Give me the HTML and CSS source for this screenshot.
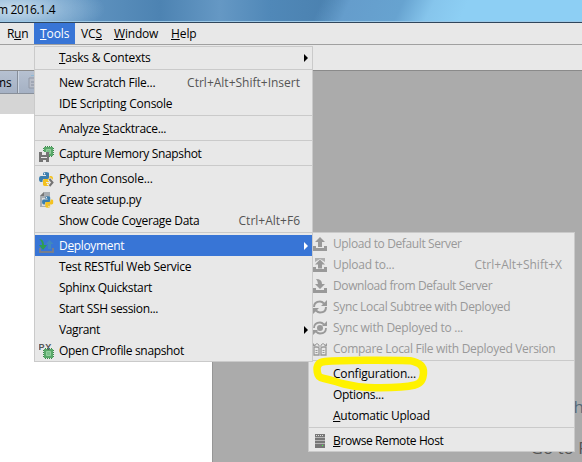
FILE: index.html
```html
<!DOCTYPE html>
<html lang="en">
<head>
<meta charset="utf-8">
<title>Tools menu</title>
<link rel="stylesheet" href="styles.css">
</head>
<body>
<svg class="defs" aria-hidden="true">
  <symbol id="chip" viewBox="0 0 11 11"><path d="M2 .5h8M2 10.500h8M.5 2v8M10.500 2v8" stroke="#3c8a4c" stroke-dasharray="1 1"/><path d="M1 1h9v9H1z" fill="#59a869"/><path d="M3.500 3.500h4v4h-4z" fill="#7cc08a" stroke="#92cf9c"/></symbol>
  <symbol id="python" viewBox="0 0 14 14"><path d="M4 3V1.5Q4 0 7 0t3 1.500V5.500Q10 7 8.500 7H5Q3.500 7 3.500 9v1H2Q0 10 0 7t2-3h5V3z" fill="#3c7eae"/><path d="M10 11v1.500Q10 14 7 14t-3-1.500V8.500Q4 7 5.500 7H9q1.500 0 1.500-2V4H12q2 0 2 3t-2 3H7v1z" fill="#f4c21f"/><circle cx="5.500" cy="1.700" r=".7" fill="#fff"/><circle cx="8.500" cy="12.300" r=".7" fill="#fff"/></symbol>
  <symbol id="tray" viewBox="0 0 14 14"><path d="M0 9h3v2h8V9h3v5H0z"/></symbol>
</svg>
<div class="window">
  <header class="titlebar"><span class="title">m 2016.1.4</span></header>
  <nav class="menubar">
    <span class="top run">R<u>u</u>n</span><span class="top tools"><u>T</u>ools</span><span class="top vcs">VC<u>S</u></span><span class="top win"><u>W</u>indow</span><span class="top help"><u>H</u>elp</span>
  </nav>
  <div class="toolbar"></div>
  <main class="workspace">
    <section class="left">
      <div class="tabs"><span class="tab">ms</span><span class="tab file"><svg width="12" height="15" viewBox="0 0 12 15"><path d="M1 3h7l2 2v8H1z" fill="#b8bdc8" stroke="#9098a6"/><path d="M3 7h5M3 10h5" stroke="#8890a0"/><path d="M3 .5h8" stroke="#91b9d4"/></svg></span></div>
      <div class="strip"></div>
    </section>
    <section class="editor"><p class="hint first">h</p><p class="hint second">Go to F</p></section>
  </main>
</div>

<div class="menu submenu">
  <div class="item off"><span class="icon"><svg viewBox="0 0 14 14"><use href="#tray"/><path d="M7 0l5 5H9v5H5V5H2z"/></svg></span><span class="label t5">Upload to Default Server</span></div>
  <div class="item off"><span class="icon"><svg viewBox="0 0 14 14"><use href="#tray"/><path d="M2 0h10v4l-5-3-5 3z" opacity=".7"/><path d="M7 1.500l5 5H9v4H5v-4H2z"/></svg></span><span class="label t2">Upload to...</span><span class="key">Ctrl+Alt+Shift+X</span></div>
  <div class="item off"><span class="icon"><svg viewBox="0 0 14 14"><use href="#tray"/><path d="M3 0q6 0 6 5h3l-5 5-5-5h3q0-3-2-5z"/></svg></span><span class="label t5">Download from Default Server</span></div>
  <div class="item off"><span class="icon"><svg viewBox="0 0 14 14"><path d="M1 7q0-5.500 6-5.500 2 0 4 2M13 7q0 5.500-6 5.500-2 0-4-2" fill="none" stroke="#999" stroke-width="2"/><path d="M14 0v6H8zM0 14V8h6z"/></svg></span><span class="label t4">Sync Local Subtree with Deployed</span></div>
  <div class="item off"><span class="icon"><svg viewBox="0 0 14 14"><path d="M1 7q0-5.500 6-5.500 2 0 4 2M13 7q0 5.500-6 5.500-2 0-4-2" fill="none" stroke="#999" stroke-width="1.800"/><path d="M14 0v5H9zM0 14V9h5z"/><circle cx="7" cy="7" r="3"/></svg></span><span class="label t2">Sync with Deployed to ...</span></div>
  <div class="item off"><span class="icon"><svg viewBox="0 0 14 14"><path d="M1 5v8h5V6L4 5zM8 6v7h5V5h-3z" fill="#e8e8e8" stroke="#999" stroke-width="1.300"/><path d="M2.500 8.500h2M2.500 10.500h2M9.500 8.500h2M9.500 10.500h2M2 3q2-3 4 0v2M12 3q-2-3-4 0v2" fill="none" stroke="#999"/><path d="M0 1v3h3zM14 1v3h-3z"/></svg></span><span class="label t3">Compare Local File with Deployed Version</span></div>
  <div class="sep"></div>
  <div class="item"><span class="icon"></span><span class="label t1">Configuration...</span></div>
  <div class="item"><span class="icon"></span><span class="label t3">Options...</span></div>
  <div class="item"><span class="icon"></span><span class="label t2"><u>A</u>utomatic Upload</span></div>
  <div class="sep"></div>
  <div class="item"><span class="icon"><svg viewBox="0 0 14 14"><path d="M2 0h10v14H2z" fill="#777"/><path d="M2 3.500h10M2 6.500h10M2 9.500h10" stroke="#b5b5b5"/><path d="M3 1.500h8" stroke="#ddd" stroke-dasharray="1 1"/><path d="M9 11h1v1H9z" fill="#4f4"/></svg></span><span class="label t5"><u>B</u>rowse Remote Host</span></div>
</div>

<div class="menu main">
  <div class="item"><span class="icon"></span><span class="label t2"><u>T</u>asks &amp; Contexts</span><i class="arrow"></i></div>
  <div class="sep"></div>
  <div class="item"><span class="icon"></span><span class="label t2">New Scratch File...</span><span class="key">Ctrl+Alt+Shift+Insert</span></div>
  <div class="item"><span class="icon"></span><span class="label t2">IDE Scripting Console</span></div>
  <div class="sep"></div>
  <div class="item"><span class="icon"></span><span class="label t3">Analyze <u>S</u>tacktrace...</span></div>
  <div class="sep"></div>
  <div class="item"><span class="icon"><svg viewBox="0 0 15 16"><use href="#chip" x="4" y="0" width="11" height="11"/><path d="M0 6h10v10H0z" fill="#747474"/><path d="M3 6h4v3H3zM2 11h6v1H2zM4 14h3v2H4z" fill="#e8e8e8"/></svg></span><span class="label t4">Capture Memory Snapshot</span></div>
  <div class="sep"></div>
  <div class="item"><span class="icon"><svg viewBox="0 0 15 16"><use href="#python" x="0" y="1" width="14" height="14"/><path d="M10 8l4 3.500-4 3.500" fill="none" stroke="#e8e8e8" stroke-width="4"/><path d="M10.500 8l3 3.500-3 3.500" fill="none" stroke="#747474" stroke-width="2"/></svg></span><span class="label t1">Python Console...</span></div>
  <div class="item"><span class="icon"><svg viewBox="0 0 15 16"><path d="M1 4l4-4h6v15H1z" fill="#a8adb2"/><path d="M1 4h4V0z" fill="#777"/><path d="M3 6h6v8H3z" fill="#ddd"/><use href="#python" x="3" y="4" width="11.500" height="12"/></svg></span><span class="label t5">Create setup.py</span></div>
  <div class="item"><span class="icon"></span><span class="label t3">Show Code Co<u>v</u>erage Data</span><span class="key">Ctrl+Alt+F6</span></div>
  <div class="sep"></div>
  <div class="item on"><span class="icon"><svg viewBox="0 0 15 16"><path d="M0 10h2v3h11v-3h2v5H0z" fill="#777e8c"/><path d="M0 1q5 0 5 6h3l-4 5-4-5h3q0-4-3-6z" fill="#2f9d50"/><path d="M10.500 2l4 4h-2.500v5h-3V6H7z" fill="#4189bd"/></svg></span><span class="label t4">D<u>e</u>ployment</span><i class="arrow"></i></div>
  <div class="item"><span class="icon"></span><span class="label t3">Test RESTful Web Service</span></div>
  <div class="item"><span class="icon"></span><span class="label t4">Sphinx Quickstart</span></div>
  <div class="item"><span class="icon"></span><span class="label t4">Start SSH session...</span></div>
  <div class="item"><span class="icon"></span><span class="label t5">Vagrant</span><i class="arrow"></i></div>
  <div class="item"><span class="icon"><svg viewBox="0 0 15 16"><use href="#chip" x="4" y="5" width="11" height="11"/><text x="-0.500" y="6.500" class="py">PY</text></svg></span><span class="label t4">Open CProfile snapshot</span></div>
</div>

<svg class="marker" width="120" height="40" viewBox="0 0 120 40"><path d="M5.300 17C4 10 7 7 13 6.500C30 5 75 5 98 5.700C108 8 112 11 111.500 18C111 25 109 28 103 30C90 33 75 33 56 32.500C45 32 40 31 32 29C24 27 20 25 12 23.500C7 22.500 6 21 5.300 17Z"/></svg>
</body>
</html>
```
FILE: styles.css
```css
* { box-sizing: border-box; }
body {
  margin: 0;
  width: 582px;
  height: 462px;
  overflow: hidden;
  position: relative;
  background: #fff;
  color: #000;
  font: 12px/21px "Open Sans", "Noto Sans", sans-serif;
}
.defs { position: absolute; width: 0; height: 0; }
u {
  text-decoration: underline;
  text-decoration-thickness: 1px;
  text-underline-offset: 1px;
  text-decoration-skip-ink: none;
}

.window { display: flex; flex-direction: column; height: 462px; }
.titlebar {
  height: 25px;
  line-height: 19px;
  border-bottom: 1px solid #30465c;
  box-shadow: inset 0 -1px #9cc8e6;
  background:
    radial-gradient(ellipse 90px 28px at 15px 9px, rgba(203, 222, 237, .95), rgba(160, 195, 224, .6) 55%, transparent),
    linear-gradient(115deg, transparent 0 292px, #659dcc 318px, #67a3d0 366px, #86c5ec 394px, #8dcff4 425px),
    linear-gradient(90deg, #82aed2, #5e92bf 90px, #4d83b2 160px, #6598c4 220px, #5088b8 270px, #4a80ae 340px, #67a3d0);
}
.title { letter-spacing: -.35px; margin-left: -3px; }
.menubar { height: 22px; display: flex; background: #e8e8e8; border-bottom: 1px solid #a0a0a0; }
.top { padding-left: 6px; white-space: nowrap; letter-spacing: -.1px; }
.run { width: 34px; padding-left: 7px; letter-spacing: -.3px; }
.tools { width: 41px; background: #3875d6; color: #fff; }
.vcs { width: 33px; }
.win { width: 57px; letter-spacing: -.2px; }
.toolbar { height: 28px; background: #e8e8e8; border-bottom: 1px solid #8a8a8a; }
.workspace { flex: 1; display: flex; }
.left { width: 212px; background: #fff; }
.tabs { height: 23px; display: flex; background: #b2bdce; border-bottom: 1px solid #888f9a; }
.tab { width: 18px; border-right: 1px solid #858d99; text-indent: -5px; line-height: 24px; background: linear-gradient(#b6c1d1, #a5b1c4); }
.file { width: 30px; padding: 4px 0 0 9px; text-indent: 0; line-height: 0; border-left: 1px solid #ccd5e1; }
.strip { height: 20px; background: #d5d5d5; }
.editor { flex: 1; background: #ababab; border-left: 1px solid #969696; overflow: hidden; display: flex; flex-direction: column; align-items: flex-end; padding-top: 322px; font-size: 17px; color: #555; white-space: nowrap; }
.hint { margin: 0; line-height: 28px; }
.first { color: #536778; margin-right: -2px; }
.second { margin: 13px -5px 0 0; }

.menu { position: absolute; background: #e8e8e8; border: 1px solid #cacaca; }
.main { left: 34px; top: 46px; width: 279px; height: 316px; }
.submenu { left: 308px; top: 232px; width: 267px; height: 220px; }
.item { height: 21px; display: flex; align-items: center; white-space: nowrap; padding-right: 12px; }
.item.on { background: #3875d6; color: #fff; }
.item.off { color: #999; fill: #999; }
.icon { width: 24px; flex: none; padding-left: 4px; display: flex; }
.icon svg { width: 15px; height: 16px; display: block; }
.submenu .icon svg { width: 14px; height: 14px; }
.t1 { letter-spacing: -.19px; }
.t2 { letter-spacing: -.25px; }
.t3 { letter-spacing: -.3px; }
.t4 { letter-spacing: -.34px; }
.t5 { letter-spacing: -.39px; }
.sep { height: 4px; padding-top: 1px; }
.sep::before { content: ""; display: block; height: 1px; background: #cacaca; }
.key { margin-left: auto; color: #555; }
.off .key { color: #999; }
.arrow { margin: 0 -8px 0 auto; border-left: 4px solid #000; border-top: 4px solid transparent; border-bottom: 4px solid transparent; }
.on .arrow { border-left-color: #fff; }
.py { font: 700 9px "Liberation Sans", sans-serif; letter-spacing: .8px; fill: #555; }
.marker { position: absolute; left: 312px; top: 355px; pointer-events: none; }
.marker path { fill: none; stroke: #fff200; stroke-width: 7.5; stroke-linejoin: round; }
```
